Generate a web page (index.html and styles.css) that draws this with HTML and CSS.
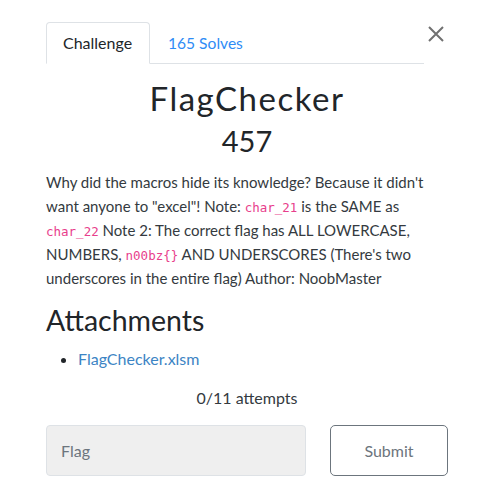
FILE: index.html
```html
<!DOCTYPE html>
<html>
<head>
<meta charset="utf-8">
<link rel="stylesheet" href="styles.css">
</head>
<body>
<div class="modal">
  <div class="tabs-row">
    <ul class="tabs">
      <li class="tab active">Challenge</li>
      <li class="tab link">165 Solves</li>
    </ul>
    <button class="close" aria-label="Close">
      <svg width="16" height="16" viewBox="0 0 16 16"><path d="M1 1L15 15M15 1L1 15" stroke="#717171" stroke-width="2" fill="none"/></svg>
    </button>
  </div>
  <h3 class="name">FlagChecker</h3>
  <h4 class="value">457</h4>
  <p class="desc">Why did the macros hide its knowledge? Because it didn't want anyone to "excel"! Note: <code>char_21</code> is the SAME as <code>char_22</code> Note 2: The correct flag has ALL LOWERCASE, NUMBERS, <code>n00bz{}</code> AND UNDERSCORES (There's two underscores in the entire flag) Author: NoobMaster</p>
  <h3 class="att">Attachments</h3>
  <ul class="files"><li><a>FlagChecker.xlsm</a></li></ul>
  <p class="attempts">0/11 attempts</p>
  <div class="submit-row">
    <input class="flag" placeholder="Flag">
    <button class="submit">Submit</button>
  </div>
</div>
</body>
</html>
```
FILE: styles.css
```css
* { box-sizing: border-box; }
body { margin: 0; font-family: Lato, "Open Sans", sans-serif; color: #212529; background: #fff; }
.modal { width: 402px; margin-left: 46px; padding-top: 22px; }
.tabs-row { display: flex; align-items: flex-start; }
.tabs { list-style: none; margin: 0; padding: 0; display: flex; width: 378px; border-bottom: 1px solid #dee2e6; }
.tab { font-size: 16px; line-height: 24px; padding: 8px 16px; border: 1px solid transparent; border-radius: 4px 4px 0 0; margin-bottom: -1px; }
.tab.active { border-color: #dee2e6 #dee2e6 #fff; color: #212529; width: 104px; }
.tab.link { color: #2e8cf6; padding-left: 17px; font-size: 15.6px; }
.close { background: none; border: 0; padding: 0; margin: 4px 0 0 4px; width: 16px; height: 16px; }
.close svg { display: block; }
.name { margin: 14px 0 0; text-align: center; font-weight: 400; font-size: 33px; line-height: 40px; letter-spacing: 1.5px; color: #212529; }
.value { margin: 3px 0 0; text-align: center; font-weight: 400; font-size: 29px; line-height: 40px; color: #212529; }
.desc { margin: 9px 0 0; font-size: 15px; line-height: 24px; color: #343a40; }
code { font-family: "DejaVu Sans Mono", monospace; font-size: 12.5px; line-height: 1; color: #e83e8c; }
.att { margin: 13px 0 0; font-weight: 400; font-size: 28.5px; line-height: 34px; color: #212529; }
.files { margin: 10px 0 0; padding-left: 32px; font-size: 16px; line-height: 24px; }
.files a { color: #3c84c4; }
.attempts { margin: 15px 0 0; text-align: center; font-size: 16px; line-height: 24px; color: #343a40; }
.submit-row { display: flex; justify-content: space-between; margin-top: 15px; }
.flag { width: 260px; height: 51px; background: #efefef; border: 1px solid #dee2e6; border-radius: 4px; padding: 0 14px; font-family: Lato, sans-serif; font-size: 16px; }
.flag::placeholder { color: #6c757d; }
.submit { width: 118px; height: 51px; background: #fff; border: 1px solid #6c757d; border-radius: 5px; color: #6c757d; font-family: Lato, sans-serif; font-size: 16px; }
```
